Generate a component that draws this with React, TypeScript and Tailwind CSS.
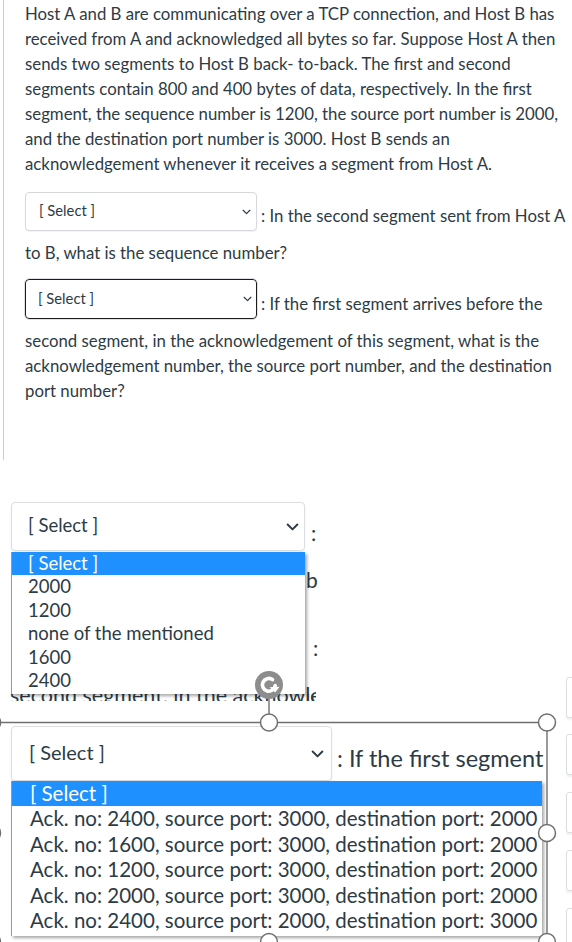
import React from "react";

const ink = "#2d3b45";

function Chevron({ w, h, sw }: { w: number; h: number; sw: number }) {
  return (
    <svg width={w} height={h} viewBox="0 0 12 7" className="shrink-0">
      <path d="M1.5 1.2l4.5 4.5 4.5-4.5" fill="none" stroke={ink} strokeWidth={sw} strokeLinecap="round" strokeLinejoin="round" />
    </svg>
  );
}

function RotateHandle() {
  return (
    <svg width="30" height="30" viewBox="0 0 30 30">
      <circle cx="15" cy="15" r="14" fill="#8d8d8d" />
      <path d="M21.2 15.5A6.4 6.4 0 1 1 18.5 9.6" fill="none" stroke="#fff" strokeWidth="3.6" strokeLinecap="round" />
      <path d="M15.5 17.2l5.8 5.2 4.2-5.6z" fill="#fff" />
    </svg>
  );
}

const ackOptions = [
  "Ack. no: 2400, source port: 3000, destination port: 2000",
  "Ack. no: 1600, source port: 3000, destination port: 2000",
  "Ack. no: 1200, source port: 3000, destination port: 2000",
  "Ack. no: 2000, source port: 3000, destination port: 2000",
  "Ack. no: 2400, source port: 2000, destination port: 3000",
];

const numOptions = ["2000", "1200", "none of the mentioned", "1600", "2400"];

export default function App() {
  return (
    <div className="relative h-[942px] w-[572px] overflow-hidden bg-white font-['Lato','Noto_Sans',sans-serif] text-[#2d3b45]">
      {/* quiz question */}
      <section className="ml-[3px] h-[460px] border-l border-[#c7cdd1] pl-[21px] pt-[1px]">
        <p className="whitespace-nowrap text-[16.8px] leading-[25px]">
          Host A and B are communicating over a TCP connection, and Host B has
          <br />
          received from A and acknowledged all bytes so far. Suppose Host A then
          <br />
          sends two segments to Host B back- to-back. The first and second
          <br />
          segments contain 800 and 400 bytes of data, respectively. In the first
          <br />
          segment, the sequence number is 1200, the source port number is 2000,
          <br />
          and the destination port number is 3000. Host B sends an
          <br />
          acknowledgement whenever it receives a segment from Host A.
        </p>

        <div className="mt-[16px] flex items-center whitespace-nowrap">
          <div className="flex h-[39px] w-[232px] items-center justify-between rounded-[4px] border border-[#d5d9dc] bg-white pl-[13px] pr-[5px] shadow-[0_1px_1px_rgba(0,0,0,0.05)]">
            <span className="pb-[2px] text-[14.8px]">[ Select ]</span>
            <Chevron w={9} h={6} sw={1.6} />
          </div>
          <span className="pl-[4px] pt-[7px] text-[16.8px] leading-[25px]">: In the second segment sent from Host A</span>
        </div>
        <p className="mt-[9px] text-[16.8px] leading-[25px]">to B, what is the sequence number?</p>

        <div className="mt-[14px] flex items-center whitespace-nowrap">
          <div className="flex h-[40px] w-[232px] items-center justify-between rounded-[4px] border-[1.5px] border-[#1c1c1c] bg-white pl-[12px] pr-[4px] outline outline-1 outline-[#dfe2e4]">
            <span className="pb-[2px] text-[14.8px]">[ Select ]</span>
            <Chevron w={9} h={6} sw={1.6} />
          </div>
          <span className="pl-[4px] pt-[8px] text-[16.8px] leading-[25px]">: If the first segment arrives before the</span>
        </div>
        <p className="mt-[9px] whitespace-nowrap text-[16.8px] leading-[25px]">
          second segment, in the acknowledgement of this segment, what is the
          <br />
          acknowledgement number, the source port number, and the destination
          <br />
          port number?
        </p>
      </section>

      {/* pasted screenshots with the open dropdowns */}
      <section className="relative h-[482px]">
        <div className="ml-[11px] flex items-center pt-[42px]">
          <div className="flex h-[49px] w-[294px] items-center justify-between rounded-[4px] border border-[#dcdfe2] bg-white pl-[16px] pr-[5px] shadow-[0_1px_2px_rgba(0,0,0,0.08)]">
            <span className="pb-[2px] text-[18.5px]">[ Select ]</span>
            <Chevron w={13} h={8} sw={1.8} />
          </div>
          <span className="pl-[6px] pt-[12px] text-[21px]">:</span>
        </div>

        <div className="ml-[11px] mt-[175px] flex items-center whitespace-nowrap">
          <div className="flex h-[55px] w-[321px] items-center justify-between rounded-[4px] border border-[#dcdfe2] bg-white pl-[17px] pr-[7px] shadow-[0_1px_2px_rgba(0,0,0,0.08)]">
            <span className="pb-[4px] text-[20px]">[ Select ]</span>
            <Chevron w={13} h={8} sw={1.8} />
          </div>
          <span className="pl-[5px] pt-[10px] text-[23.5px]">: If the first segment</span>
        </div>

        {/* text from underneath the first list */}
        <span className="absolute left-[306px] top-[108px] text-[21px] leading-[24px]">b</span>
        <span className="absolute left-[313px] top-[176px] text-[21px] leading-[24px]">:</span>
        <div className="absolute left-[10px] top-[234px] h-[7px] w-[306px] overflow-hidden">
          <span className="-mt-[11px] block whitespace-nowrap text-[21.5px] leading-[24px]">second segment, in the acknowledgement</span>
        </div>
        <div className="absolute left-[305px] top-[225px] h-[16px] w-[11px] overflow-hidden">
          <span className="-ml-[295px] -mt-[2px] block whitespace-nowrap text-[21.5px] leading-[24px]">second segment, in the acknowledgement</span>
        </div>

        <ul className="absolute left-[11px] top-[92px] w-[294px] border-l border-[#9a9a9a] bg-white pb-[2px] text-[18.5px] leading-[23.4px] shadow-[2px_2px_3px_rgba(0,0,0,0.35)]">
          <li className="bg-[#1e90ff] pl-[16px] text-white">[ Select ]</li>
          {numOptions.map((o) => (
            <li key={o} className="pl-[16px]">
              {o}
            </li>
          ))}
        </ul>

        <ul className="absolute left-[11px] top-[321px] w-[531px] whitespace-nowrap border-l border-[#9a9a9a] bg-white pb-[3px] text-[20.5px] leading-[25.4px] shadow-[2px_2px_3px_rgba(0,0,0,0.35)]">
          <li className="bg-[#1e90ff] pl-[18px] text-white">[ Select ]</li>
          {ackOptions.map((o, i) => (
            <li key={i} className="pl-[18px]">
              {o}
            </li>
          ))}
        </ul>

        {/* edges of controls on the right */}
        {[217, 274, 332, 390, 448].map((t) => (
          <div key={t} className="absolute left-[566px] h-[41px] w-[20px] rounded-[3px] border border-[#dcdfe2] bg-white shadow-[0_2px_2px_rgba(0,0,0,0.06)]" style={{ top: t }} />
        ))}

        {/* image selection frame */}
        <svg className="pointer-events-none absolute left-0 top-0" width="572" height="482" viewBox="0 0 572 482">
          <g stroke="#6f6f6f" strokeWidth="1.4" fill="none">
            <line x1="0" y1="262.5" x2="547" y2="262.5" />
            <line x1="547" y1="262.5" x2="547" y2="482" />
            <line x1="269" y1="239" x2="269" y2="262.5" />
          </g>
          {[
            [269, 262.5],
            [547, 262.5],
            [547, 373],
            [547, 482],
            [269, 482],
            [-8, 262.5],
            [-8, 373],
            [-8, 482],
          ].map(([x, y], i) => (
            <circle key={i} cx={x} cy={y} r="8.5" fill="#fff" stroke="#6f6f6f" strokeWidth="1.5" />
          ))}
        </svg>
        <div className="absolute left-[254px] top-[210px]">
          <RotateHandle />
        </div>
      </section>
    </div>
  );
}
